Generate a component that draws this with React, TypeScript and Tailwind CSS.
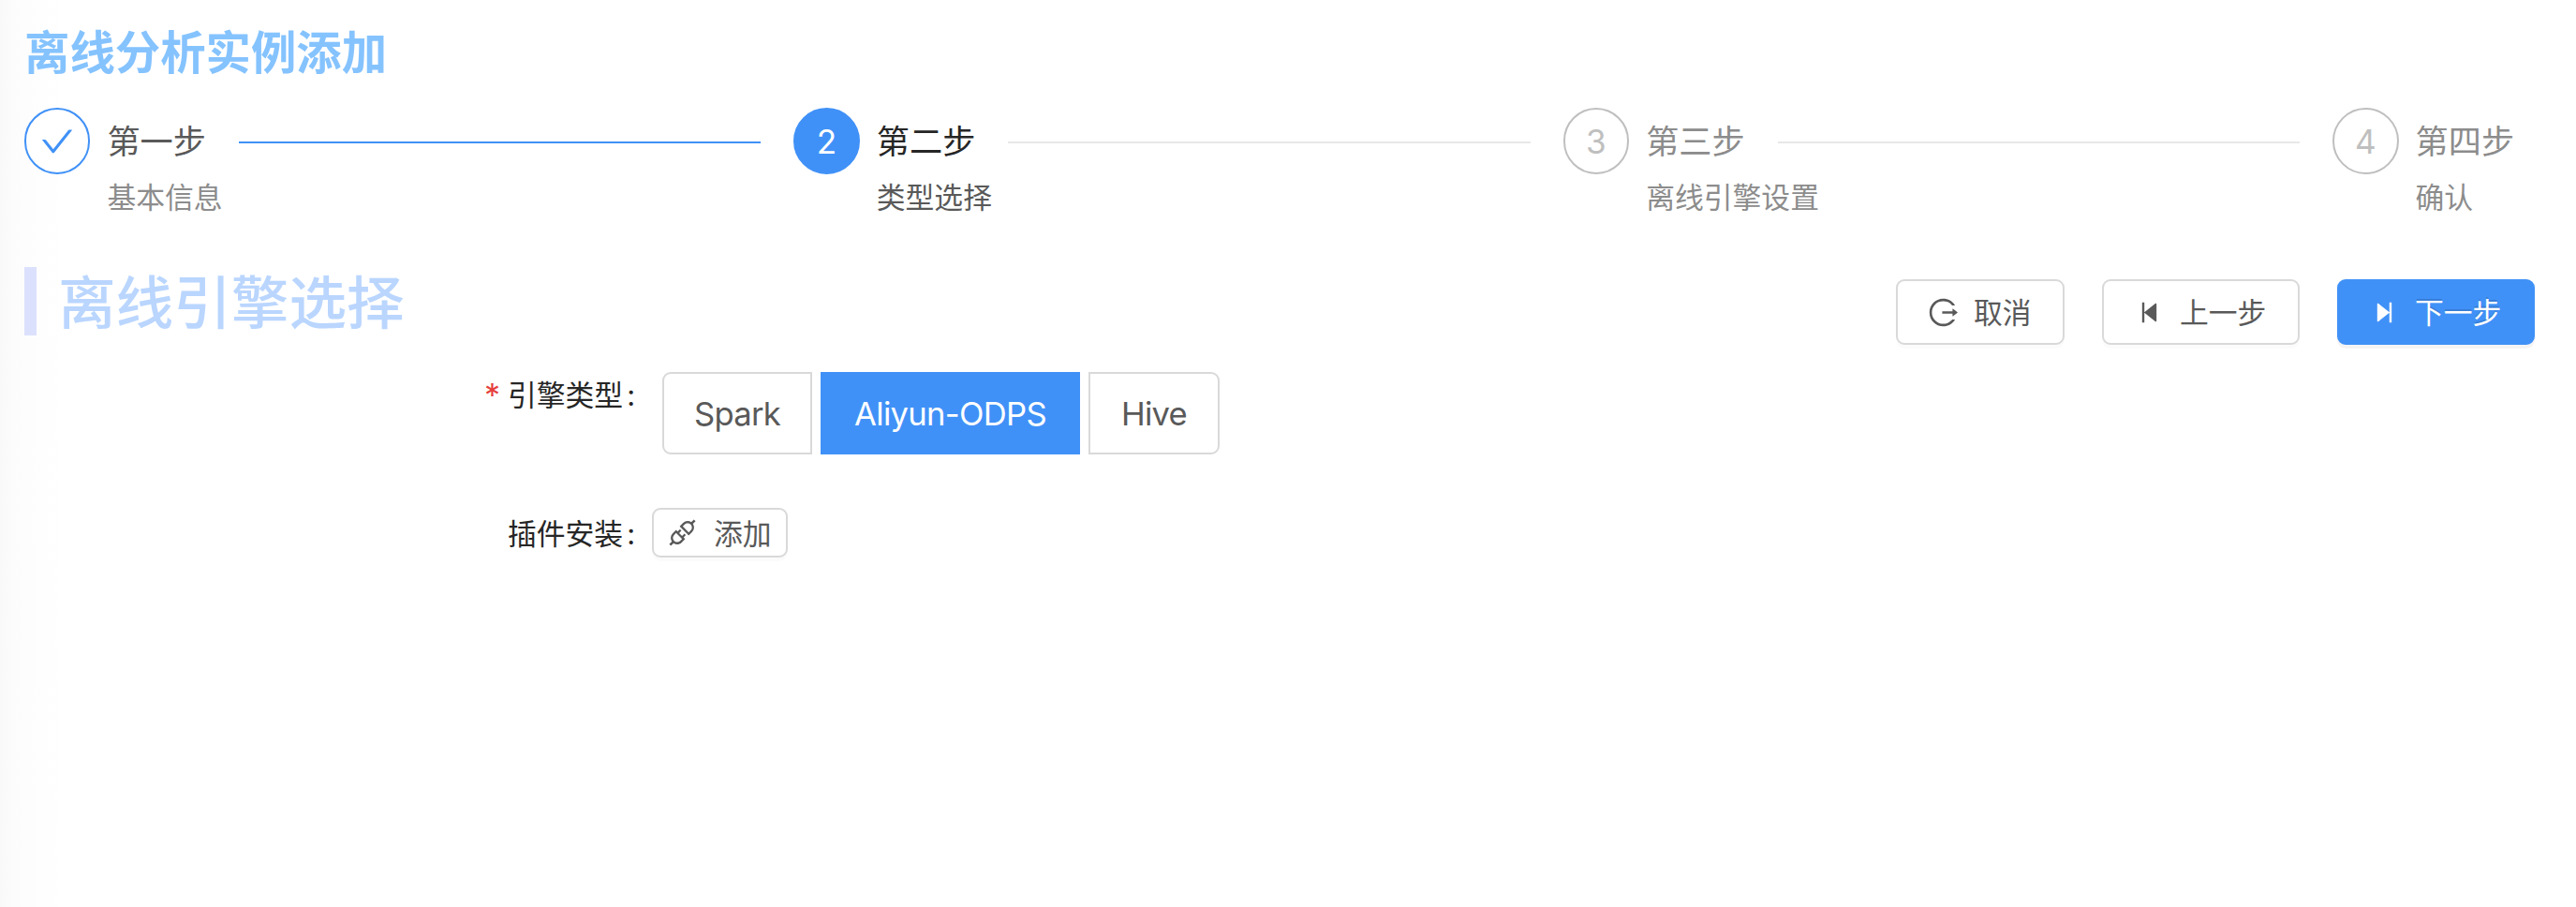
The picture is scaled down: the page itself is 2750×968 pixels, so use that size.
import type { ReactNode } from "react";
import {
  AiFillStepBackward,
  AiFillStepForward,
  AiOutlineApi,
  AiOutlineCheck,
  AiOutlineLogout,
} from "react-icons/ai";

type Status = "finish" | "process" | "wait";

interface StepInfo {
  title: string;
  description: string;
  status: Status;
}

const steps: StepInfo[] = [
  { title: "第一步", description: "基本信息", status: "finish" },
  { title: "第二步", description: "类型选择", status: "process" },
  { title: "第三步", description: "离线引擎设置", status: "wait" },
  { title: "第四步", description: "确认", status: "wait" },
];

const circleStyle: Record<Status, string> = {
  finish: "border-[#4091f7] bg-white text-[#4091f7]",
  process: "border-[#4091f7] bg-[#4091f7] text-white",
  wait: "border-[#bfbfbf] bg-white text-[#bfbfbf]",
};

const titleStyle: Record<Status, string> = {
  finish: "text-[#595959]",
  process: "text-[#262626]",
  wait: "text-[#8c8c8c]",
};

const descriptionStyle: Record<Status, string> = {
  finish: "text-[#8c8c8c]",
  process: "text-[#595959]",
  wait: "text-[#8c8c8c]",
};

function Step({ step, index, last }: { step: StepInfo; index: number; last: boolean }) {
  return (
    <li className={last ? "flex flex-none items-start" : "flex w-[821.4px] flex-none items-start"}>
      <span
        className={`mr-[18px] flex h-[71px] w-[70.4px] flex-none items-center justify-center rounded-full border-2 text-[35.2px] ${circleStyle[step.status]}`}
      >
        {step.status === "finish" ? (
          <AiOutlineCheck className="size-[40px]" />
        ) : (
          <span className="pt-px">{index + 1}</span>
        )}
      </span>
      <div className="min-w-0 flex-1">
        <div className={`flex h-[72px] items-center text-[35.2px] ${titleStyle[step.status]}`}>
          <span className="whitespace-nowrap">{step.title}</span>
          {!last && (
            <span
              className={`mt-[2px] mr-[35px] ml-[35px] h-[2px] flex-1 ${
                step.status === "finish" ? "bg-[#4091f7]" : "bg-[#e8e8e8]"
              }`}
            />
          )}
        </div>
        <div className={`text-[30.8px] leading-[47px] whitespace-nowrap ${descriptionStyle[step.status]}`}>
          {step.description}
        </div>
      </div>
    </li>
  );
}

function ActionButton({
  icon,
  label,
  className,
}: {
  icon: ReactNode;
  label: string;
  className: string;
}) {
  return (
    <button
      className={`flex h-[70px] items-center rounded-[9px] border-2 pl-[33px] text-[30.8px] whitespace-nowrap ${className}`}
    >
      <span className="flex size-[31px] flex-none items-center justify-center">{icon}</span>
      <span className="ml-[17px] pt-[2px]">{label}</span>
    </button>
  );
}

const defaultButton = "border-[#d9d9d9] bg-white text-[#595959] shadow-[0_4px_0_rgba(0,0,0,0.016)]";
const primaryButton =
  "border-[#4091f7] bg-[#4091f7] text-white shadow-[0_4px_0_rgba(0,0,0,0.045)] [text-shadow:0_-2px_0_rgba(0,0,0,0.12)]";

function EngineOption({ label, className }: { label: string; className: string }) {
  return (
    <button
      className={`flex h-[88px] items-center justify-center border-2 pt-px text-[34.6px] tracking-[-0.7px] ${className}`}
    >
      {label}
    </button>
  );
}

export default function App() {
  return (
    <main className="h-[968px] w-[2750px] overflow-hidden bg-white bg-[linear-gradient(to_right,#f9f9f9_0,#fcfcfc_14px,#fdfdfd_30px,#fefefe_48px,#ffffff_70px)] pl-[26px] font-[Inter,'Noto_Sans_CJK_SC',sans-serif]">
      <h1 className="h-[115px] pt-[21px] text-[48.4px] leading-[72px] font-bold text-[#85c3ff]">
        离线分析实例添加
      </h1>

      <ol className="flex h-[170px]">
        {steps.map((step, index) => (
          <Step key={step.title} step={step} index={index} last={index === steps.length - 1} />
        ))}
      </ol>

      <section className="flex h-[112px] items-start justify-between pr-[44px]">
        <h2 className="flex h-[73px] items-center border-l-[13px] border-[#dbe1fc] pt-[5px] pl-[23px] text-[61.6px] font-medium text-[#bad6ff]">
          离线引擎选择
        </h2>
        <div className="flex pt-[13px]">
          <ActionButton
            icon={<AiOutlineLogout className="size-[35px] flex-none" />}
            label="取消"
            className={`mr-[40px] w-[180px] ${defaultButton}`}
          />
          <ActionButton
            icon={<AiFillStepBackward className="size-[31px]" />}
            label="上一步"
            className={`mr-[40px] w-[211px] ${defaultButton}`}
          />
          <ActionButton
            icon={<AiFillStepForward className="size-[31px]" />}
            label="下一步"
            className={`w-[211px] ${primaryButton}`}
          />
        </div>
      </section>

      <form>
        <div className="flex h-[145px] items-start">
          <label className="flex w-[681px] justify-end pr-[29px] text-[30.8px] leading-[50px] text-[#262626]">
            <span className="mr-[8px] font-[Inter] text-[34px] text-[#e6403c]">*</span>
            引擎类型
            <span className="ml-[4px]">:</span>
          </label>
          <div className="flex gap-[9px]">
            <EngineOption label="Spark" className="w-[160px] rounded-l-[9px] border-[#d9d9d9] bg-white text-[#595959]" />
            <EngineOption label="Aliyun-ODPS" className="w-[277px] border-[#4091f7] bg-[#4091f7] text-white" />
            <EngineOption label="Hive" className="w-[140px] rounded-r-[9px] border-[#d9d9d9] bg-white text-[#595959]" />
          </div>
        </div>
        <div className="flex items-start">
          <label className="flex w-[670px] justify-end pr-[18px] text-[30.8px] leading-[55px] text-[#262626]">
            插件安装
            <span className="ml-[4px]">:</span>
          </label>
          <button
            type="button"
            className={`flex h-[53px] w-[145px] items-center rounded-[9px] border-2 pl-[15px] text-[30.8px] whitespace-nowrap ${defaultButton}`}
          >
            <span className="flex size-[31px] flex-none items-center justify-center">
              <AiOutlineApi className="size-[35px] flex-none" />
            </span>
            <span className="ml-[18px] pt-[3px]">添加</span>
          </button>
        </div>
      </form>
    </main>
  );
}
